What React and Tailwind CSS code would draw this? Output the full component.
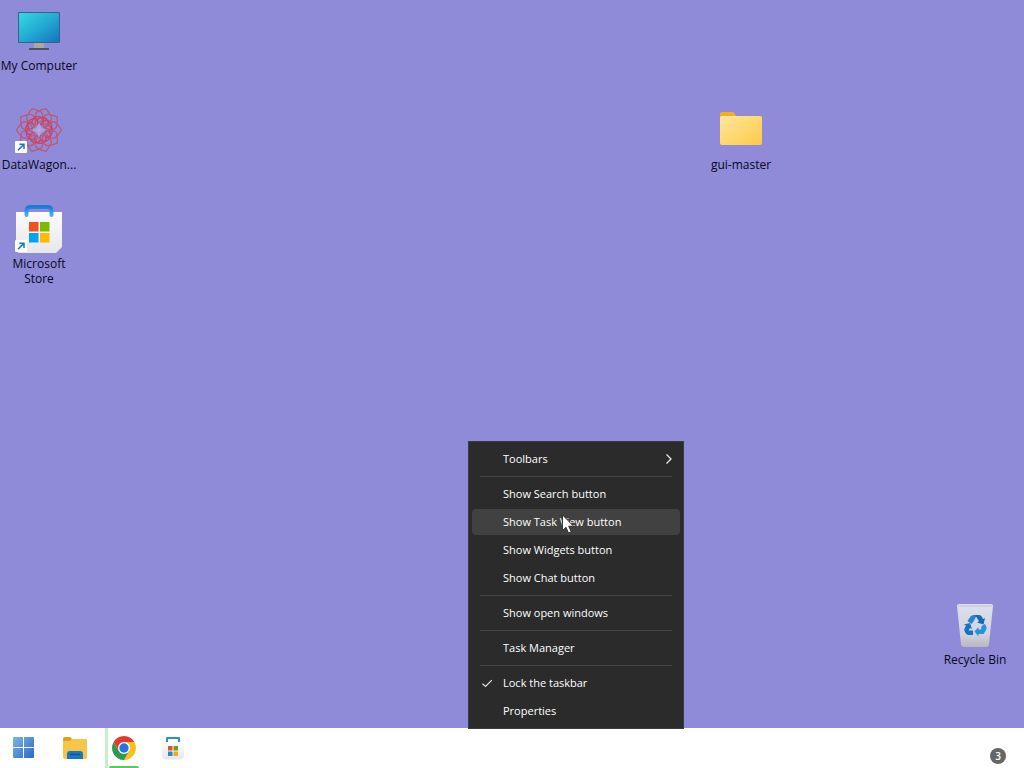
import React from "react";

function ShortcutArrow() {
  return (
    <g>
      <rect x="0" y="35" width="12" height="12" rx="1" fill="#fbfdff" />
      <path d="M3 44.2 8.6 38.6M4.4 38.3H9v4.6" fill="none" stroke="#1f78b8" strokeWidth="1.5" />
    </g>
  );
}

function ComputerIcon() {
  return (
    <svg viewBox="0 0 48 48" className="size-12" aria-hidden="true">
      <defs>
        <linearGradient id="screen" x1="0" y1="0" x2="1" y2="1">
          <stop offset="0" stopColor="#35d8e2" />
          <stop offset="0.5" stopColor="#24abd3" />
          <stop offset="1" stopColor="#1474bd" />
        </linearGradient>
      </defs>
      <rect x="19" y="36" width="10" height="6" fill="#a9a8a6" />
      <rect x="14" y="41" width="20" height="2" rx="0.5" fill="#4c5265" />
      <rect x="3" y="5" width="42" height="31" rx="1" fill="#3c5f86" />
      <rect x="4" y="6" width="40" height="29" fill="url(#screen)" />
    </svg>
  );
}

const petals = [18, 54, 90, 126, 162, 198, 234, 270, 306, 342];

function DataWagonIcon() {
  return (
    <svg viewBox="0 0 48 48" className="size-12" aria-hidden="true">
      <g fill="none" strokeLinejoin="round">
        {petals.map((a) => (
          <g key={a} transform={`rotate(${a} 24 24)`}>
            <path d="M24 18C17 17 14 10 17 7Q20 4 24 1.500Q28 4 31 7C34 10 31 17 24 18Z" stroke="#bd587c" strokeWidth="1.3" />
            <path d="M19 15Q23 8 29 12T27 20" stroke="#d0405c" strokeWidth="1.4" />
          </g>
        ))}
      </g>
      <path d="M24 19 25.500 22.500 29 24 25.500 25.500 24 29 22.500 25.500 19 24 22.500 22.500Z" fill="#a9b6e4" stroke="#a9a4dc" strokeWidth="2" />
      <ShortcutArrow />
    </svg>
  );
}

function StoreIcon() {
  return (
    <svg viewBox="0 0 48 48" className="size-12" aria-hidden="true">
      <defs>
        <linearGradient id="bag" x1="0" y1="0" x2="0" y2="1">
          <stop offset="0" stopColor="#fcfcfd" />
          <stop offset="1" stopColor="#e7e7ea" />
        </linearGradient>
        <linearGradient id="handle" x1="0" y1="0" x2="0" y2="1">
          <stop offset="0" stopColor="#1c7ad4" />
          <stop offset="1" stopColor="#45b1f2" />
        </linearGradient>
      </defs>
      <path d="M1 7H47V42L41 48H5Q1 48 1 44Z" fill="url(#bag)" />
      <path d="M11.500 10V6Q11.500 2 15 2H33Q36.500 2 36.500 6V10" fill="none" stroke="url(#handle)" strokeWidth="4" strokeLinecap="round" />
      <rect x="14" y="17" width="9.500" height="9.500" fill="#f25022" />
      <rect x="25" y="17" width="9.500" height="9.500" fill="#7fba00" />
      <rect x="14" y="28" width="9.500" height="9.500" fill="#00a4ef" />
      <rect x="25" y="28" width="9.500" height="9.500" fill="#ffb900" />
      <ShortcutArrow />
    </svg>
  );
}

function FolderIcon() {
  return (
    <svg viewBox="0 0 48 48" className="size-12" aria-hidden="true">
      <defs>
        <linearGradient id="folder" x1="0" y1="0" x2="1" y2="1">
          <stop offset="0" stopColor="#ffe69c" />
          <stop offset="1" stopColor="#fdca45" />
        </linearGradient>
      </defs>
      <path d="M3 8Q3 6 5 6H15Q17 6 18 8L19 10H43Q45 10 45 12V20H3Z" fill="#f1b024" />
      <path d="M3 12Q3 10 5 10H43Q45 10 45 12V37Q45 39 43 39H5Q3 39 3 37Z" fill="url(#folder)" />
    </svg>
  );
}

function RecycleIcon() {
  return (
    <svg viewBox="0 0 48 48" className="size-12" aria-hidden="true">
      <defs>
        <linearGradient id="bin" x1="0" y1="0" x2="0" y2="1">
          <stop offset="0" stopColor="#dddfed" />
          <stop offset="0.7" stopColor="#d3d3de" />
          <stop offset="1" stopColor="#b9b7bf" />
        </linearGradient>
      </defs>
      <path d="M6 5Q6 3 8 3H40Q42 3 42 5L38 43Q37.600 46 35 46H13Q10.400 46 10 43Z" fill="url(#bin)" />
      <path d="M7 4H41L40.800 6H7.200Z" fill="#ced0e2" />
      <g>
        <path d="M16.500 20 19.500 15.500Q20.500 14 22.500 14H26L22.500 20.500 20.500 23Z" fill="#2386d2" />
        <path d="M24 14H28Q30 14 31 16L32 18 34 17 32.500 23.500 26 21.500 28 20.300Z" fill="#126bb5" />
        <path d="M30.500 25 34 23 35.500 26Q36 28 34.500 30L32.500 33H27.500V35.500L23.500 30.500 27.500 26V28.500H30Z" fill="#2792dc" />
        <path d="M13 23.500 19 22 21 28 19 27 17.500 29.500H22V34H17.500Q15.500 34 14.500 32L13.500 30Q12.800 28.500 14 26.500L15 24.700Z" fill="#1674c1" />
      </g>
    </svg>
  );
}

function StartIcon() {
  return (
    <svg viewBox="0 0 24 24" className="size-6" aria-hidden="true">
      <defs>
        <linearGradient id="start" gradientUnits="userSpaceOnUse" x1="1" y1="1" x2="23" y2="23">
          <stop offset="0" stopColor="#79b6e5" />
          <stop offset="1" stopColor="#2865c6" />
        </linearGradient>
      </defs>
      <path d="M2 1H11V11H1V2Q1 1 2 1ZM12 1H21Q22 1 22 2V11H12ZM1 12H11V22H2Q1 22 1 21ZM12 12H22V21Q22 22 21 22H12Z" fill="url(#start)" />
    </svg>
  );
}

function ExplorerIcon() {
  return (
    <svg viewBox="0 0 24 24" className="size-6" aria-hidden="true">
      <path d="M0 3Q0 1 2 1H7Q8 1 9 3H22Q24 3 24 5V10H0Z" fill="#df9f20" />
      <path d="M0 5H6Q7.500 5 8.500 3H22Q24 3 24 5V21Q24 23 22 23H2Q0 23 0 21Z" fill="#f7c548" />
      <path d="M4 23V18Q4 15 7 15H17Q20 15 20 18V23Z" fill="#1678c4" />
      <path d="M7.500 18.500H16.500" stroke="#0b528f" strokeWidth="1.500" strokeLinecap="round" />
    </svg>
  );
}

function ChromeIcon() {
  return (
    <svg viewBox="0 0 24 24" className="size-6" aria-hidden="true">
      <path d="M12 12V6H22.390A12 12 0 0 1 12 24L17.200 15Z" fill="#fbc116" />
      <path d="M12 12 17.200 15 12 24A12 12 0 0 1 1.610 6L6.800 15Z" fill="#2e9b4b" />
      <path d="M1.610 6 6.800 15 12 12V6H22.390A12 12 0 0 0 1.610 6Z" fill="#e13b30" />
      <circle cx="12" cy="12" r="6" fill="#fff" />
      <circle cx="12" cy="12" r="4.700" fill="#2674e4" />
    </svg>
  );
}

function StoreSmallIcon() {
  return (
    <svg viewBox="0 0 24 24" className="size-6" aria-hidden="true">
      <path d="M1 6H23V19Q23 23.500 19 23.500H5Q1 23.500 1 19Z" fill="url(#bag)" />
      <path d="M6 6V2H18V6" fill="none" stroke="#2298bd" strokeWidth="2" strokeLinejoin="round" />
      <rect x="7" y="10" width="4.500" height="4.500" fill="#df542e" />
      <rect x="12.500" y="10" width="4.500" height="4.500" fill="#709b20" />
      <rect x="7" y="15.500" width="4.500" height="4.500" fill="#1991c8" />
      <rect x="12.500" y="15.500" width="4.500" height="4.500" fill="#e9ac1d" />
    </svg>
  );
}

function DesktopItem({ label, children }) {
  return (
    <button type="button" className="flex w-[78px] flex-col items-center gap-[3px] text-[12px] leading-[15px] text-[#08081c]">
      {children}
      <span className="text-center">{label}</span>
    </button>
  );
}

function MenuItem({ label, active, checked, submenu }) {
  return (
    <button
      type="button"
      role={checked ? "menuitemcheckbox" : "menuitem"}
      aria-checked={checked ? true : undefined}
      aria-haspopup={submenu ? "menu" : undefined}
      className={`my-px flex h-[26px] items-center rounded px-2 text-left ${active ? "bg-[#414141]" : "hover:bg-[#414141]"}`}
    >
      <span className="w-[23px] shrink-0">
        {checked && (
          <svg viewBox="0 0 14 14" className="size-3.5" fill="none" stroke="#e4e4e4" strokeWidth="1.2" aria-hidden="true">
            <path d="M2.500 7.800 5.500 10.500 11.800 4.200" />
          </svg>
        )}
      </span>
      <span className="grow">{label}</span>
      {submenu && (
        <svg viewBox="0 0 8 12" className="h-3 w-2" fill="none" stroke="#e8e8e8" strokeWidth="1.3" aria-hidden="true">
          <path d="M2.500 1.500 7 6 2.500 10.500" />
        </svg>
      )}
    </button>
  );
}

function Separator() {
  return <hr className="mx-2 my-[3px] border-[#454545]" />;
}

function TaskbarButton({ label, children }) {
  return (
    <button type="button" aria-label={label} className="flex w-8 items-center justify-center">
      {children}
    </button>
  );
}

export default function App() {
  return (
    <div className="flex min-h-screen flex-col bg-[#8f8bd8] font-['Open_Sans','Noto_Sans',sans-serif]">
      <main className="relative grow">
        <div className="flex flex-col gap-[33px] pt-[7px]">
          <DesktopItem label="My Computer"><ComputerIcon /></DesktopItem>
          <DesktopItem label="DataWagon..."><DataWagonIcon /></DesktopItem>
          <DesktopItem label="Microsoft Store"><StoreIcon /></DesktopItem>
        </div>
        <div className="absolute top-[106px] left-[702px]">
          <DesktopItem label="gui-master"><FolderIcon /></DesktopItem>
        </div>
        <div className="absolute right-[10px] bottom-[61px]">
          <DesktopItem label="Recycle Bin"><RecycleIcon /></DesktopItem>
        </div>

        <div
          role="menu"
          aria-label="Taskbar"
          className="absolute -bottom-px left-[468px] z-10 flex w-[216px] flex-col border border-[#3a3a40] bg-[#2b2b2b] p-[3px] text-[11px] font-medium text-white"
        >
          <MenuItem label="Toolbars" submenu />
          <Separator />
          <MenuItem label="Show Search button" />
          <MenuItem label="Show Task View button" active />
          <MenuItem label="Show Widgets button" />
          <MenuItem label="Show Chat button" />
          <Separator />
          <MenuItem label="Show open windows" />
          <Separator />
          <MenuItem label="Task Manager" />
          <Separator />
          <MenuItem label="Lock the taskbar" checked />
          <MenuItem label="Properties" />
          <svg viewBox="0 0 14 20" className="absolute top-[72px] left-[92px] h-5 w-3.5" aria-hidden="true">
            <path d="M1.500 1V16.500L5 13.200 7.500 19 10.200 17.800 7.700 12.200H12.500Z" fill="#fff" stroke="#1c1c1c" strokeWidth="0.800" />
          </svg>
        </div>
      </main>

      <footer className="flex h-10 items-stretch justify-between bg-white pr-[18px] pl-2">
        <nav aria-label="Taskbar" className="flex items-stretch">
          <TaskbarButton label="Start"><StartIcon /></TaskbarButton>
          <div className="flex w-[65px] pl-[19px]">
            <TaskbarButton label="File Explorer"><ExplorerIcon /></TaskbarButton>
          </div>
          <div className="flex w-9 border-l-[3px] border-[#c4efc8] pr-px">
            <button type="button" aria-label="Google Chrome" className="flex w-full flex-col items-center justify-end gap-[6px]">
              <ChromeIcon />
              <span className="h-[2px] w-[30px] rounded-t bg-[#52cf50]" />
            </button>
          </div>
          <div className="flex pl-4">
            <TaskbarButton label="Microsoft Store"><StoreSmallIcon /></TaskbarButton>
          </div>
        </nav>
        <span className="mt-5 flex size-4 items-center justify-center rounded-full bg-[#666666] text-[10px] font-semibold text-white">3</span>
      </footer>
    </div>
  );
}
